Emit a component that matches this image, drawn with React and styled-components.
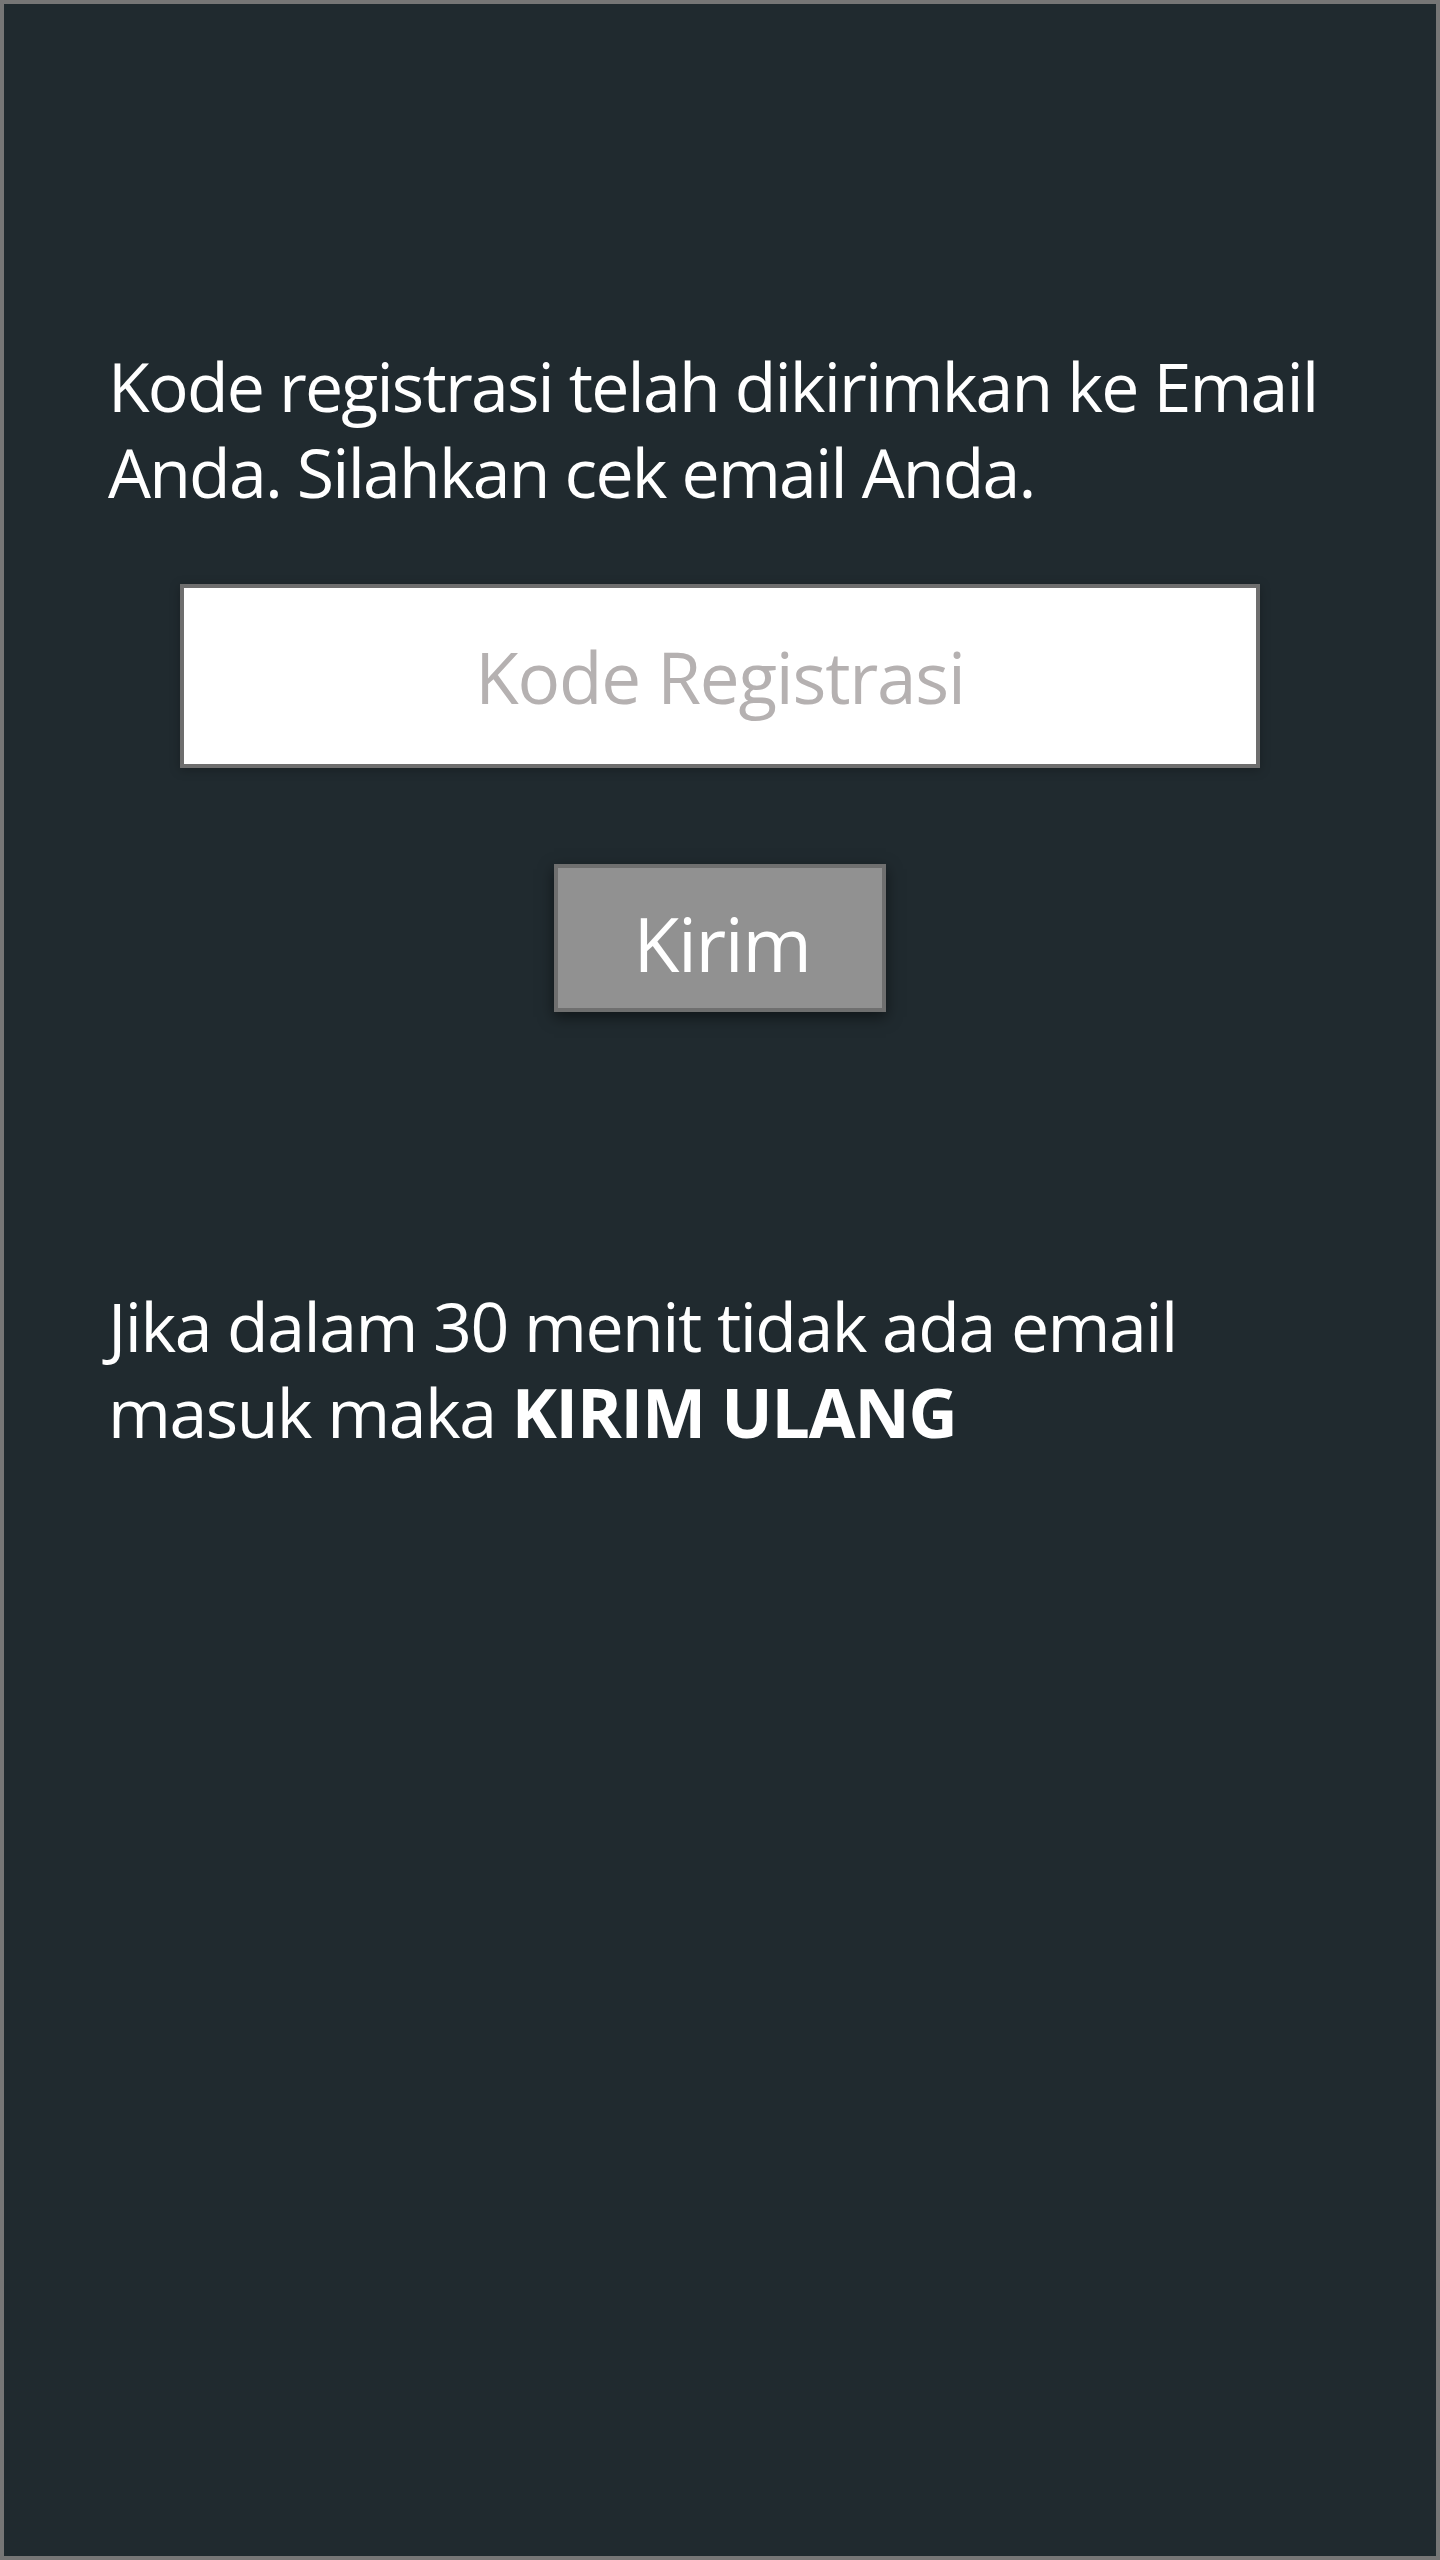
import React from "react";
import styled, { createGlobalStyle } from "styled-components";

const GlobalStyle = createGlobalStyle`
  html, body {
    margin: 0;
    padding: 0;
    background: #202a2f;
  }
  * { box-sizing: border-box; }
`;

const Screen = styled.div`
  width: 1440px;
  height: 2560px;
  border: 4px solid #767676;
  background: #202a2f;
  display: flex;
  flex-direction: column;
  align-items: center;
  padding: 339px 104px 0;
  font-family: "Open Sans", "Noto Sans", sans-serif;
  color: #ffffff;
`;

const Message = styled.p`
  align-self: stretch;
  margin: ${(p) => p.$top || 0}px 0 0;
  font-size: 68px;
  line-height: 86px;
  letter-spacing: ${(p) => p.$tracking ?? -1.8}px;
  font-weight: 400;
`;

const Strong = styled.strong`
  font-weight: 700;
  letter-spacing: -1.2px;
`;

const CodeInput = styled.input`
  margin-top: 69px;
  width: 1080px;
  height: 184px;
  border: 4px solid #6e6e6e;
  background: #ffffff;
  box-shadow: 0 2px 10px rgba(0, 0, 0, 0.25);
  font-family: "Open Sans", "Noto Sans", sans-serif;
  font-size: 71px;
  letter-spacing: -1.2px;
  text-align: center;
  color: #333;
  padding: 0;
  outline: none;
  &::placeholder {
    color: #b5b1b1;
    opacity: 1;
  }
`;

const SendButton = styled.button`
  margin-top: 96px;
  width: 332px;
  height: 148px;
  border: 4px solid #6f6f6f;
  background: #919191;
  box-shadow: 0 5px 14px rgba(0, 0, 0, 0.5);
  color: #ffffff;
  font-family: "Open Sans", "Noto Sans", sans-serif;
  font-size: 75px;
  letter-spacing: -1.4px;
  display: flex;
  align-items: center;
  justify-content: center;
  padding: 10px 0 0 4px;
  cursor: pointer;
`;

export default function App() {
  return (
    <>
      <GlobalStyle />
      <Screen>
        <Message>
          Kode registrasi telah dikirimkan ke Email Anda. Silahkan cek email Anda.
        </Message>
        <CodeInput type="text" placeholder="Kode Registrasi" />
        <SendButton type="button">Kirim</SendButton>
        <Message $top={271} $tracking={-1.5}>
          Jika dalam 30 menit tidak ada email masuk maka <Strong>KIRIM ULANG</Strong>
        </Message>
      </Screen>
    </>
  );
}
